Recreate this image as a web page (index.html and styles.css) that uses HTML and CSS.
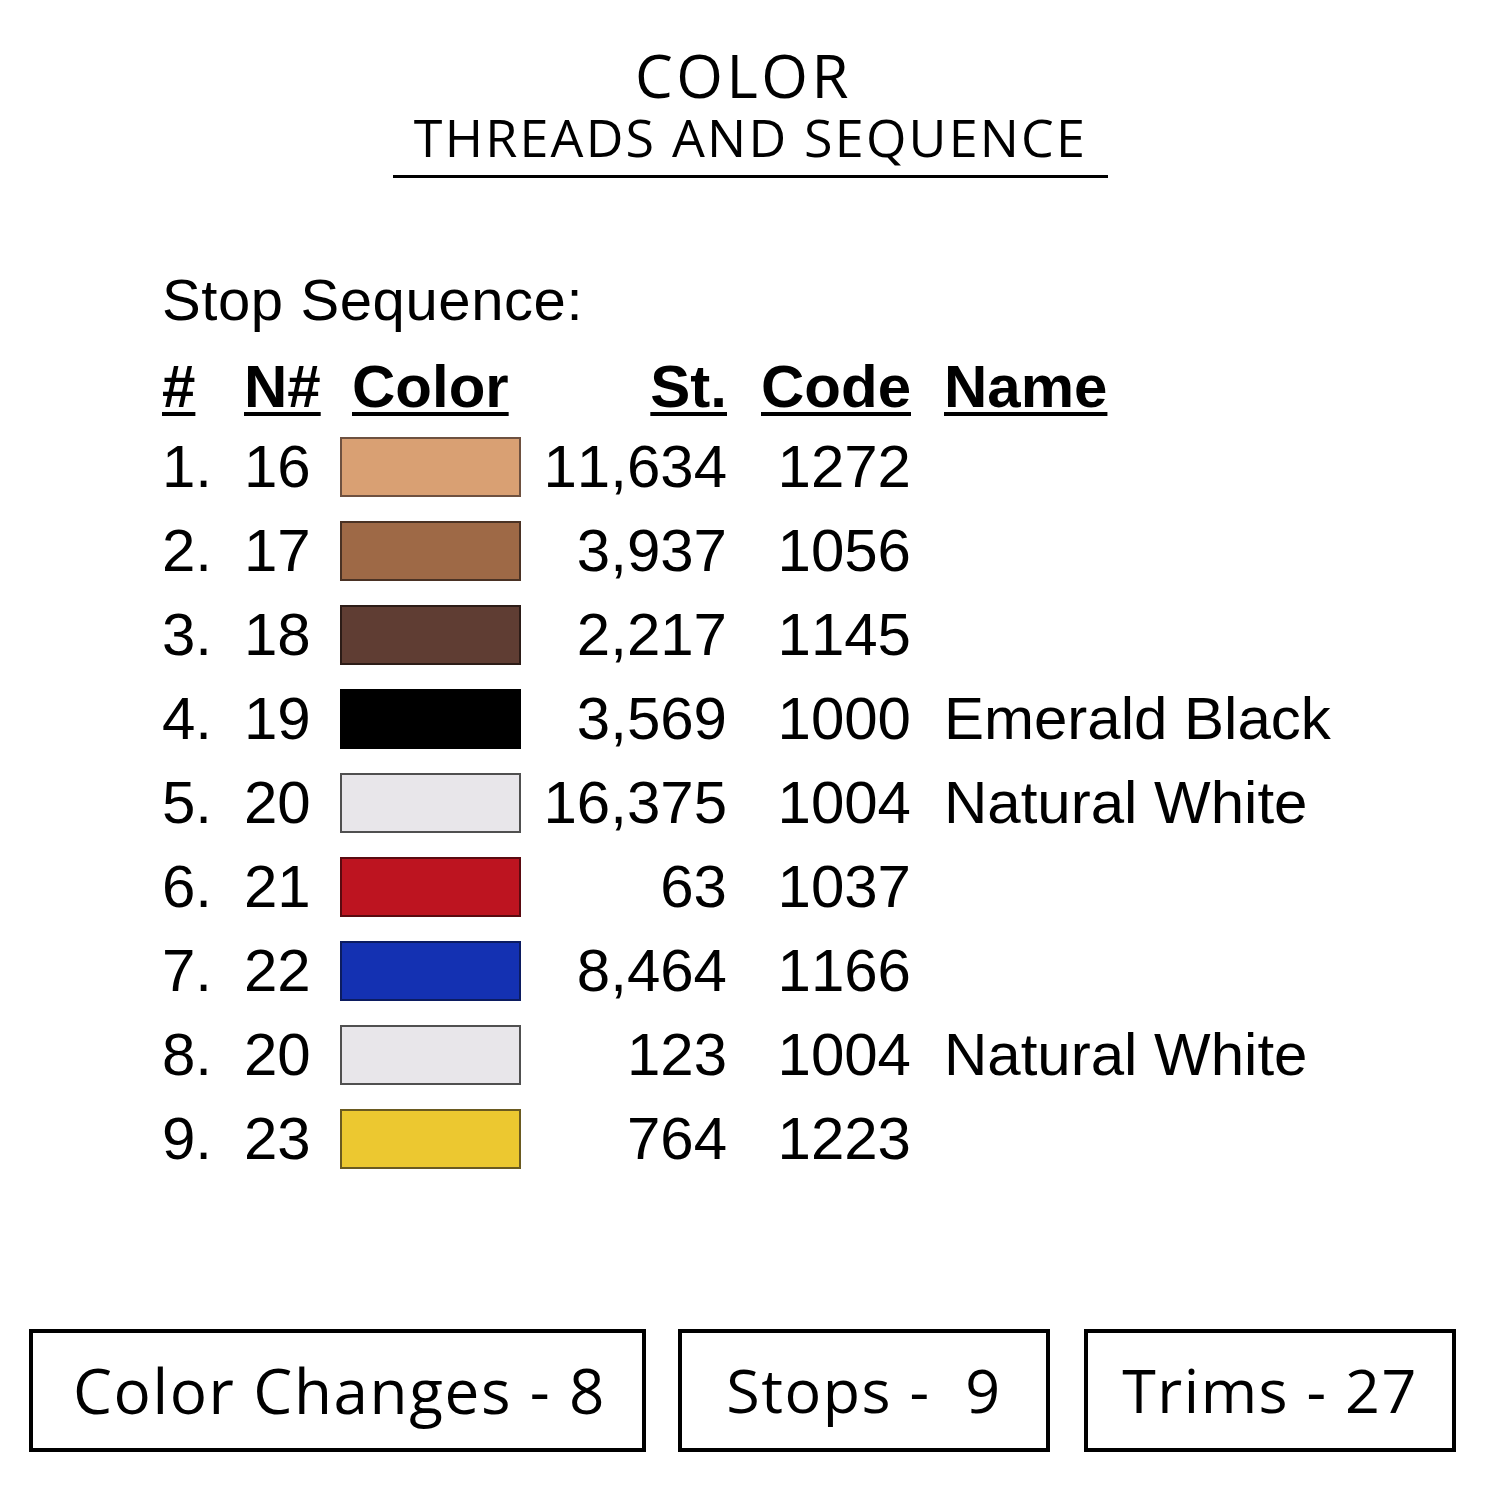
FILE: index.html
```html
<!DOCTYPE html>
<html>
<head>
<meta charset="utf-8">
<link rel="stylesheet" href="styles.css">
</head>
<body>
<div class="page">
  <header class="title">
    <div class="title-main">COLOR</div>
    <div class="title-sub">THREADS AND SEQUENCE</div>
  </header>

  <section class="sequence">
    <div class="seq-label">Stop Sequence:</div>
    <div class="row head">
      <span class="c-num"><u>#</u></span>
      <span class="c-n"><u>N#</u></span>
      <span class="c-color"><u>Color</u></span>
      <span class="c-st"><u>St.</u></span>
      <span class="c-code"><u>Code</u></span>
      <span class="c-name"><u>Name</u></span>
    </div>
    <div class="row"><span class="c-num">1.</span><span class="c-n">16</span><span class="c-color"><i class="sw sw-1"></i></span><span class="c-st">11,634</span><span class="c-code">1272</span><span class="c-name"></span></div>
    <div class="row"><span class="c-num">2.</span><span class="c-n">17</span><span class="c-color"><i class="sw sw-2"></i></span><span class="c-st">3,937</span><span class="c-code">1056</span><span class="c-name"></span></div>
    <div class="row"><span class="c-num">3.</span><span class="c-n">18</span><span class="c-color"><i class="sw sw-3"></i></span><span class="c-st">2,217</span><span class="c-code">1145</span><span class="c-name"></span></div>
    <div class="row"><span class="c-num">4.</span><span class="c-n">19</span><span class="c-color"><i class="sw sw-4"></i></span><span class="c-st">3,569</span><span class="c-code">1000</span><span class="c-name">Emerald Black</span></div>
    <div class="row"><span class="c-num">5.</span><span class="c-n">20</span><span class="c-color"><i class="sw sw-5"></i></span><span class="c-st">16,375</span><span class="c-code">1004</span><span class="c-name">Natural White</span></div>
    <div class="row"><span class="c-num">6.</span><span class="c-n">21</span><span class="c-color"><i class="sw sw-6"></i></span><span class="c-st">63</span><span class="c-code">1037</span><span class="c-name"></span></div>
    <div class="row"><span class="c-num">7.</span><span class="c-n">22</span><span class="c-color"><i class="sw sw-7"></i></span><span class="c-st">8,464</span><span class="c-code">1166</span><span class="c-name"></span></div>
    <div class="row"><span class="c-num">8.</span><span class="c-n">20</span><span class="c-color"><i class="sw sw-5"></i></span><span class="c-st">123</span><span class="c-code">1004</span><span class="c-name">Natural White</span></div>
    <div class="row"><span class="c-num">9.</span><span class="c-n">23</span><span class="c-color"><i class="sw sw-9"></i></span><span class="c-st">764</span><span class="c-code">1223</span><span class="c-name"></span></div>
  </section>

  <section class="stats">
    <div class="stat stat-wide">Color Changes - 8</div>
    <div class="stat">Stops -&nbsp; 9</div>
    <div class="stat stat-last">Trims - 27</div>
  </section>
</div>
</body>
</html>
```

FILE: styles.css
```css
* { box-sizing: border-box; }
html, body { margin: 0; padding: 0; background: #fff; }
body { color: #000; font-family: "Open Sans", sans-serif; }

.page {
  width: 1500px;
  height: 1500px;
  display: flex;
  flex-direction: column;
}

/* ---------- Title ---------- */
.title {
  align-self: center;
  width: 715px;
  margin-top: 43px;
  margin-left: 1px;
  padding-bottom: 10px;
  border-bottom: 3px solid #000;
  display: flex;
  flex-direction: column;
  align-items: center;
}
.title-main {
  font-size: 60px;
  line-height: 64px;
  font-weight: 500;
  letter-spacing: 3.5px;
  margin-right: 14px;
}
.title-sub {
  margin-top: 2px;
  font-size: 52px;
  line-height: 56px;
  font-weight: 400;
  letter-spacing: 2.2px;
}

/* ---------- Sequence table ---------- */
.sequence {
  margin-top: 92px;
  padding-left: 162px;
  font-family: "Liberation Sans", Arial, sans-serif;
  font-size: 60px;
  font-kerning: none;
}
.seq-label {
  font-size: 58px;
  line-height: 60px;
  letter-spacing: 0.6px;
}
.row {
  display: grid;
  grid-template-columns: 82px 96px 181px 206px 184px auto;
  align-items: center;
  height: 84px;
  line-height: 84px;
  white-space: nowrap;
}
.row.head {
  margin-top: 19px;
  height: 76px;
  line-height: 76px;
  font-weight: 700;
}
.row.head u {
  text-decoration: underline;
  text-decoration-thickness: 4px;
  text-underline-offset: 5px;
}
.row.head .c-color { padding-left: 12px; }
.c-st, .c-code { text-align: right; }
.c-name { padding-left: 33px; }
.c-color { display: flex; align-items: center; }

.sw {
  display: block;
  width: 181px;
  height: 60px;
  border: 2px solid #3a3a3a;
}
.sw-1 { background: #d9a073; border-color: #6e5140; }
.sw-2 { background: #9e6946; border-color: #4a3224; }
.sw-3 { background: #5f3d33; border-color: #2c1c17; }
.sw-4 { background: #000000; border-color: #000; }
.sw-5 { background: #e8e6ea; border-color: #505050; }
.sw-6 { background: #bd1420; border-color: #5a0a10; }
.sw-7 { background: #1431b2; border-color: #0c1c60; }
.sw-9 { background: #ecc830; border-color: #6a5a20; }

/* ---------- Stats ---------- */
.stats {
  margin-top: auto;
  margin-bottom: 48px;
  padding-left: 29px;
  display: flex;
}
.stat {
  width: 372px;
  height: 123px;
  border: 4px solid #000;
  display: flex;
  align-items: center;
  justify-content: center;
  font-size: 61px;
  letter-spacing: 1.5px;
  font-weight: 400;
  white-space: pre;
  padding-bottom: 2px;
  margin-left: 32px;
}
.stat-wide { width: 617px; margin-left: 0; font-size: 62px; letter-spacing: 1.6px; padding-left: 4px; }
.stat-last { margin-left: 34px; }
```
